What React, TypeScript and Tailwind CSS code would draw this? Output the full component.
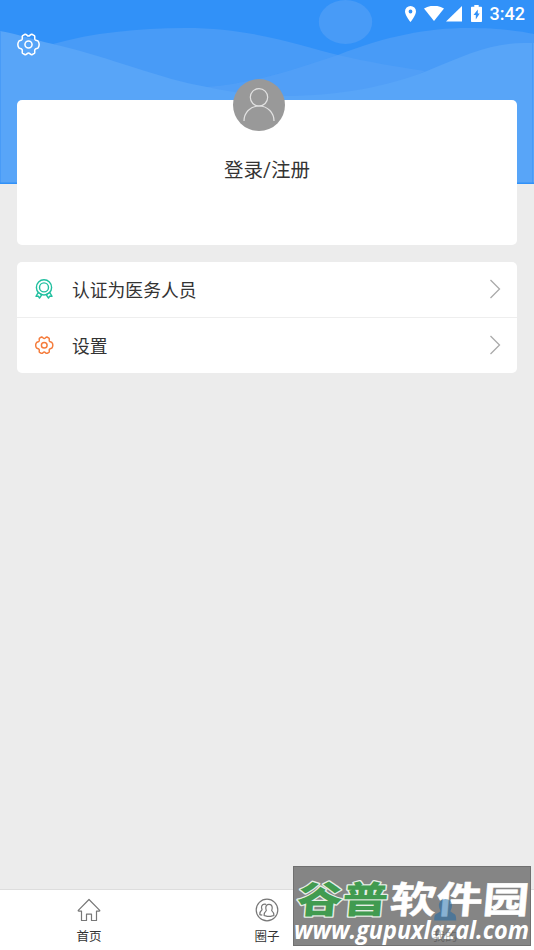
import type { ReactNode } from "react";

const GEAR =
  "M12 3.200C13.500 3.200 14 1 15.500 1.300L18.100 2.700C19.200 3.800 17.900 5 18.700 6.600C19.600 8.200 21.600 7.400 22.300 8.900C23.200 10.600 23.200 13.400 22.300 15.100C21.600 16.600 19.600 15.800 18.700 17.400C17.900 19 19.200 20.200 18.100 21.300L15.500 22.700C14 23 13.500 20.800 12 20.800C10.500 20.800 10 23 8.500 22.700L5.900 21.300C4.800 20.200 6.100 19 5.300 17.400C4.400 15.800 2.400 16.600 1.700 15.100C.8 13.400 .8 10.600 1.700 8.900C2.400 7.400 4.400 8.200 5.300 6.600C6.100 5 4.800 3.800 5.900 2.700L8.500 1.300C10 1 10.500 3.200 12 3.200z";

function GearIcon({ className }: { className: string }) {
  return (
    <svg viewBox="0 0 24 24" fill="none" stroke="currentColor" strokeLinejoin="round" className={className}>
      <path d={GEAR} />
      <circle cx="12" cy="12" r="3.700" />
    </svg>
  );
}

function MedalIcon() {
  return (
    <svg viewBox="0 0 18 20" fill="none" stroke="currentColor" strokeWidth="1.400" strokeLinejoin="round" className="mr-px h-5 w-[18px] text-[#20bf9f]">
      <circle cx="9" cy="8.400" r="7.600" />
      <circle cx="9" cy="8.400" r="4.500" />
      <path d="M3.200 13.500 1 17.300l2.300-.1 1.200 1.900 2.400-3.600zM14.800 13.500l2.200 3.800-2.300-.1-1.200 1.900-2.400-3.600z" />
    </svg>
  );
}

function Waves() {
  return (
    <svg viewBox="0 0 534 184" className="absolute inset-0 h-[184px] w-full">
      <rect width="534" height="184" fill="#3191f8" />
      <ellipse cx="345.500" cy="22" rx="26.700" ry="22" fill="#489bf7" />
      <path d="M53 44C92 33 138 28 185 28c69 0 115 18 153 27 30 7 60 12 87 16v25H207z" fill="#489bf7" />
      <path d="M207 87c56-5 93-20 131-32 48-19 90-27 130-27 30 0 51 3 66 6v80H207z" fill="#489bf7" />
      <path d="M207 87c56-5 93-20 131-32 30 7 60 12 87 16l-60 30H207z" fill="#519ff7" />
      <path d="M0 31c18 3 35 9 53 13 60 14 107 35 154 43 24 5 46 9 76 9 58 0 105-10 144-25 38-16 65-28 97-28h10v141H0z" fill="#58a5f8" />
      <path d="M.5 31v152M532.500 34v149" stroke="#489bf7" />
      <path d="M0 183.300h534" stroke="#3191f8" strokeWidth="1.400" />
    </svg>
  );
}

function StatusBar() {
  return (
    <div className="flex h-7 items-center pr-[9px] text-white">
      <svg viewBox="0 0 11 16" fill="currentColor" className="ml-auto h-4 w-[11px]">
        <path fillRule="evenodd" d="M5.500 0A5.500 5.500 0 0 0 0 5.500C0 9.500 5.500 16 5.500 16S11 9.500 11 5.500A5.500 5.500 0 0 0 5.500 0zm0 3.600a1.900 1.900 0 1 1 0 3.800 1.900 1.900 0 0 1 0-3.800z" />
      </svg>
      <svg viewBox="0 0 20 16" fill="currentColor" className="ml-[8px] h-4 w-5">
        <path d="M0 2.500C6-1.200 14-1.200 20 2.500L10 15z" />
      </svg>
      <svg viewBox="0 0 16 16" fill="currentColor" className="ml-[2px] h-4 w-4">
        <path d="M16 0v15.500H0z" />
      </svg>
      <svg viewBox="0 0 11 17" className="mb-[2px] ml-[9px] h-[17px] w-[11px]">
        <path d="M3.300 0h4.400v1.700H10c.6 0 1 .4 1 1V16c0 .6-.4 1-1 1H1c-.6 0-1-.4-1-1V2.700c0-.6.4-1 1-1h2.300z" fill="currentColor" />
        <path d="M6.800 4.500 2.500 10h2.300v4.500L8.700 8.500H6.800z" fill="#3191f8" />
      </svg>
      <span className="ml-[8px] font-[Roboto,sans-serif] text-[18px] leading-7 font-medium">3:42</span>
    </div>
  );
}

function Row({ icon, label }: { icon: ReactNode; label: string }) {
  return (
    <div className="flex h-[55.500px] items-center pr-4 pl-[18px]">
      <span className="flex w-[19px] justify-center">{icon}</span>
      <span className="mt-[4px] ml-[18px] text-[17.800px]">{label}</span>
      <svg viewBox="0 0 12 20" fill="none" stroke="#aaa" strokeWidth="1.300" className="ml-auto h-5 w-3">
        <path d="m1.500 1 9 9-9 9" />
      </svg>
    </div>
  );
}

function Tab({ icon, label, className = "text-[#333]" }: { icon: ReactNode; label: string; className?: string }) {
  return (
    <div className={`flex flex-1 flex-col items-center pt-2 text-[12.500px] leading-[18px] ${className}`}>
      <span className="flex h-6 w-6 items-center justify-center text-[#777]">{icon}</span>
      <span className="mt-[6px]">{label}</span>
    </div>
  );
}

function Watermark() {
  return (
    <div className="absolute top-[866px] left-[293px] h-20 w-[238px] border border-[#707070] bg-[#858585]">
      <svg viewBox="0 0 238 80" className="absolute -top-px -left-px h-20 w-[238px] overflow-visible">
        <g fontFamily='"Noto Sans CJK SC", sans-serif' fontSize="37" fontWeight="700" strokeLinejoin="round" transform="translate(0 47) skewX(-5)">
          <text x="3" y="0" fill="#419b50" stroke="#e6eee6" strokeWidth="2.500" paintOrder="stroke" fontWeight="900" textLength="91" lengthAdjust="spacingAndGlyphs">
            谷普
          </text>
          <text x="96" y="0" fill="#fff" stroke="#fff" strokeWidth=".5" textLength="139" lengthAdjust="spacingAndGlyphs">
            软件园
          </text>
        </g>
        <text x="1" y="73" fill="#fff" fontFamily='"Open Sans", sans-serif' fontStyle="italic" fontWeight="700" fontSize="25" textLength="235" lengthAdjust="spacingAndGlyphs">
          www.gupuxlazal.com
        </text>
      </svg>
    </div>
  );
}

export default function App() {
  return (
    <div className="relative flex h-[950px] w-[534px] flex-col overflow-hidden bg-[#ececec] font-[Roboto,'Noto_Sans_CJK_SC',sans-serif] text-[#333]">
      <Waves />
      <header className="relative h-[100px]">
        <StatusBar />
        <GearIcon className="mt-[5px] ml-[16.500px] size-[23px] text-white [stroke-width:1.6]" />
      </header>

      <main className="relative flex flex-1 flex-col gap-[17px] px-[17px]">
        <section className="flex h-[145px] flex-col items-center rounded-[5px] bg-white">
          <div className="-mt-[21px] mr-4 flex size-[52px] shrink-0 items-center justify-center rounded-full bg-[#999]">
            <svg viewBox="0 0 52 52" fill="none" stroke="#e2e2e2" strokeWidth="1.200" className="size-[52px]">
              <circle cx="26" cy="18.300" r="8.700" />
              <path d="M11 42c0-8 6-15 15-15s15 7 15 15" />
            </svg>
          </div>
          <h1 className="mt-[26px] text-[19.500px] leading-7">登录/注册</h1>
        </section>

        <section className="divide-y divide-[#eee] rounded-[5px] bg-white">
          <Row icon={<MedalIcon />} label="认证为医务人员" />
          <Row icon={<GearIcon className="mb-px size-[18.500px] text-[#f57c3c] [stroke-width:1.9]" />} label="设置" />
        </section>
      </main>

      <nav className="flex h-[61px] border-t border-[#ddd] bg-white">
        <Tab
          label="首页"
          icon={
            <svg viewBox="0 0 24 24" fill="none" stroke="currentColor" strokeWidth="1.200" strokeLinejoin="round" className="size-6">
              <path d="M12 1.500 1.300 12.300c-.3.500 0 .8.500.8h2.700v9.400h5v-6.300h5v6.300h5v-9.400h2.700c.5 0 .8-.3.500-.8z" />
            </svg>
          }
        />
        <Tab
          label="圈子"
          icon={
            <svg viewBox="0 0 24 24" fill="none" stroke="currentColor" strokeWidth="1.200" strokeLinejoin="round" className="size-6">
              <circle cx="12" cy="12" r="10.800" />
              <path d="M14 6.300c2.200 0 3.200 1.600 3.200 3.500 0 1.500-.5 2.200-.5 2.800 1.800 1.500 2.300 2.700 2.200 4.800-1 .7-2 .3-2.900.9h-4c-.9-.6-1.900-.2-2.900-.9-.1-2.100.4-3.300 2.200-4.800 0-.6-.5-1.300-.5-2.800 0-1.900 1-3.500 3.200-3.500z" />
              <path d="M11 6.300c-2.700-.8-4.700 1-4.500 3.200.1 1.200.6 1.600.5 2.300-1.700 1.400-2.300 2.900-2.200 4.700.7.600 1.500.3 2.500.7" />
            </svg>
          }
        />
        <Tab
          label="我的"
          className="relative z-10 text-[#333]/40"
          icon={
            <svg viewBox="0 0 24 24" fill="#1a6aa8" fillOpacity="0.52" className="size-6">
              <path d="M12.500 1c4.200 0 6.500 3 6.500 6.500 0 3-1.500 4.500-1.500 6l4.500 3c1 1 1.200 3 1.200 6H1.200c0-3 .2-5 1.200-6l5-3c0-1.500-1.500-3-1.500-6C6 4 8.300 1 12.500 1z" />
            </svg>
          }
        />
      </nav>
      <Watermark />
    </div>
  );
}
